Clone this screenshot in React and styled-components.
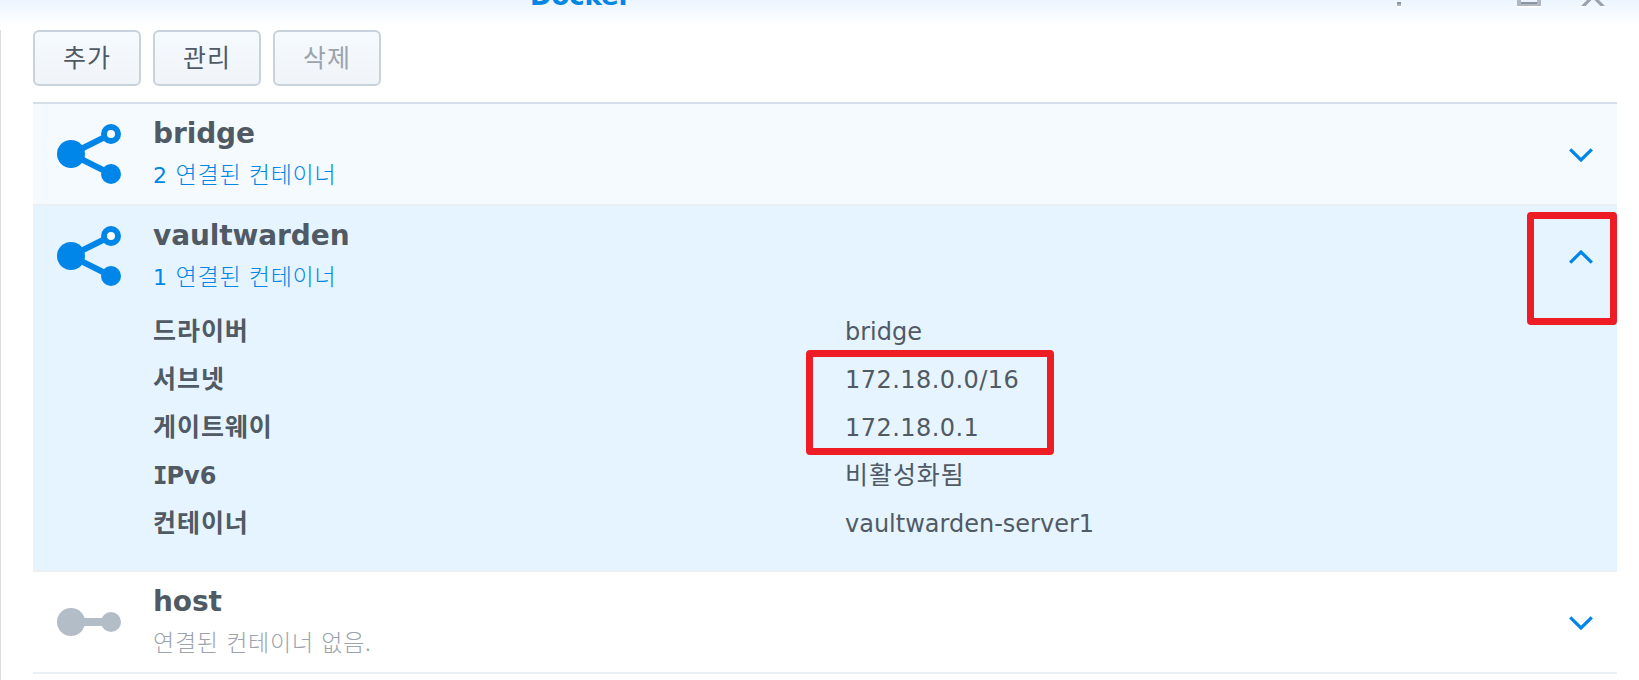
import React from "react";
import styled, { createGlobalStyle } from "styled-components";

const details = [
  { label: "드라이버", value: "bridge" },
  { label: "서브넷", value: "172.18.0.0/16" },
  { label: "게이트웨이", value: "172.18.0.1" },
  { label: "IPv6", value: "비활성화됨" },
  { label: "컨테이너", value: "vaultwarden-server1" },
];

const hasHangul = (text) => /[가-힣]/.test(text);
const isAddress = (text) => /^[\d./]+$/.test(text);

function NetworkIcon() {
  return (
    <Icon viewBox="0 0 64 60" $height={60}>
      <path d="M14 30 46 14M14 30 46 46" stroke="#0086e9" strokeWidth="6" />
      <circle cx="14" cy="30" r="14" fill="#0086e9" />
      <circle cx="54" cy="10" r="7" fill="#fff" stroke="#0086e9" strokeWidth="6" />
      <circle cx="54" cy="50" r="10" fill="#0086e9" />
    </Icon>
  );
}

function HostIcon() {
  return (
    <Icon viewBox="0 0 64 28" $height={28}>
      <path d="M14 14H54" stroke="#b2bdc8" strokeWidth="8" />
      <circle cx="14" cy="14" r="14" fill="#b2bdc8" />
      <circle cx="54" cy="14" r="10" fill="#b2bdc8" />
    </Icon>
  );
}

function Arrow({ up }) {
  return (
    <Arrow__Svg viewBox="0 0 24 14">
      <path
        d={up ? "M1.2 12.6 12 2 22.8 12.6" : "M1.2 1.4 12 12 22.8 1.4"}
        fill="none"
        stroke="#0086e9"
        strokeWidth="3.2"
      />
    </Arrow__Svg>
  );
}

function Network({ name, count, text, background, icon, open, children }) {
  return (
    <Network__Item $background={background}>
      <Network__Head>
        {icon}
        <Network__Text>
          <Network__Name>{name}</Network__Name>
          <Network__Status $muted={!count}>
            {count && <Network__Count>{count} </Network__Count>}
            {text}
          </Network__Status>
        </Network__Text>
        <Toggle>
          <Arrow up={open} />
          {open && <Mark $top={-38.5} $left={-42.5} $width={90} $height={113} />}
        </Toggle>
      </Network__Head>
      {children}
    </Network__Item>
  );
}

function App() {
  return (
    <Window>
      <GlobalStyle />
      <TitleBar>
        <TitleBar__Name>Docker</TitleBar__Name>
        <TitleBar__Icons viewBox="0 0 208 10">
          <path d="M0 6h4v1.5H0zM120 6h24v1.5h-24z" fill="#fff" />
          <path d="M0 2h4v2H0z" fill="#8a95a1" />
          <path d="M0 4h4v2H0z" fill="#acb4be" />
          <path d="M120 0h4v4h16V0h4v6h-24z" fill="#b0b7c2" />
          <path d="M124 2h16v2h-16z" fill="#8a95a1" />
          <path d="M185 7 194 -2M207 7 198 -2" stroke="#fff" strokeWidth="3" />
          <path d="M184 6h4.5L194.5 0H190zM208 6h-4.5L197.5 0H202z" fill="#98a1ac" />
        </TitleBar__Icons>
      </TitleBar>
      <Content>
        <Toolbar>
          <Button>추가</Button>
          <Button>관리</Button>
          <Button disabled>삭제</Button>
        </Toolbar>
        <List>
          <Network
            name="bridge"
            count="2"
            text="연결된 컨테이너"
            background="#f5faff"
            icon={<NetworkIcon />}
          />
          <Network
            name="vaultwarden"
            count="1"
            text="연결된 컨테이너"
            background="#e6f4ff"
            icon={<NetworkIcon />}
            open
          >
            <Details>
              {details.map(({ label, value }) => (
                <Details__Row key={label}>
                  <Details__Label $hangul={hasHangul(label)}>
                    {label.startsWith("I") ? (
                      <>
                        <Serif__Letter>I</Serif__Letter>
                        {label.slice(1)}
                      </>
                    ) : (
                      label
                    )}
                  </Details__Label>
                  <Details__Value
                    $hangul={hasHangul(value)}
                    $address={isAddress(value)}
                  >
                    {value}
                  </Details__Value>
                </Details__Row>
              ))}
              <Mark $top={44} $left={772.5} $width={248} $height={105} />
            </Details>
          </Network>
          <Network
            name="host"
            text="연결된 컨테이너 없음."
            background="#fff"
            icon={<HostIcon />}
          />
        </List>
      </Content>
    </Window>
  );
}

export default App;

const GlobalStyle = createGlobalStyle`
  * {
    box-sizing: border-box;
  }
  body {
    margin: 0;
    overflow: hidden;
    background: #fff;
    font-family: "DejaVu Sans", "Noto Sans CJK KR", sans-serif;
    color: #505a64;
  }
`;
const Window = styled.div`
  height: 680px;
  display: flex;
  flex-direction: column;
  overflow: hidden;
`;
const TitleBar = styled.header`
  height: 30px;
  flex: none;
  display: flex;
  align-items: flex-start;
  justify-content: space-between;
  padding: 0 34px 0 530px;
  overflow: hidden;
  background: linear-gradient(#ebf4fe, #f6fbff 48%, #fff 90%);
`;
const TitleBar__Name = styled.div`
  margin-top: -23px;
  font-size: 26px;
  line-height: 38px;
  font-weight: bold;
  letter-spacing: -0.1px;
  color: #0086e5;
`;
const TitleBar__Icons = styled.svg`
  width: 208px;
  height: 10px;
`;
const Content = styled.main`
  flex: 1;
  padding: 0 22px 0 32px;
  border-left: 1px solid #dcdcdc;
`;
const Toolbar = styled.div`
  display: flex;
  gap: 12px;
  margin-bottom: 16px;
`;
const Button = styled.button`
  width: 108px;
  height: 56px;
  padding: 0 0 4px;
  border: 2px solid #c8d2dc;
  border-radius: 6px;
  background: linear-gradient(#f5faff, #f0f4f8);
  font-family: "Noto Sans CJK KR", sans-serif;
  font-size: 25px;
  letter-spacing: 0.9px;
  color: #505a64;
  &:disabled {
    color: #9ba3ac;
  }
`;
const List = styled.div`
  border-top: 2px solid #d5dfeb;
`;
const Network__Item = styled.section`
  border-bottom: 2px solid #ebf0f5;
  background: ${(props) => props.$background};
`;
const Network__Head = styled.div`
  height: 100px;
  display: flex;
  align-items: center;
  padding: 0 24px;
`;
const Icon = styled.svg`
  flex: none;
  width: 64px;
  height: ${(props) => props.$height}px;
  margin-right: 32px;
`;
const Network__Text = styled.div`
  flex: 1;
  display: flex;
  flex-direction: column;
`;
const Network__Name = styled.div`
  font-size: 28px;
  line-height: 40px;
  font-weight: bold;
  letter-spacing: -0.1px;
`;
const Network__Status = styled.div`
  height: 41px;
  font-family: "Noto Sans CJK KR", sans-serif;
  font-size: 23px;
  line-height: 39px;
  font-weight: 300;
  letter-spacing: 0.75px;
  word-spacing: 1.6px;
  color: ${(props) => (props.$muted ? "#9ba3ac" : "#0086e5")};
`;
const Network__Count = styled.span`
  font-family: "DejaVu Sans", sans-serif;
  font-size: 22px;
  line-height: 1;
  font-weight: normal;
  letter-spacing: 0;
`;
const Toggle = styled.div`
  position: relative;
  display: flex;
  margin-top: 2px;
`;
const Arrow__Svg = styled.svg`
  width: 24px;
  height: 14px;
`;
const Details = styled.div`
  position: relative;
  padding: 1px 0 23px 120px;
`;
const Details__Row = styled.div`
  height: 48px;
  display: grid;
  grid-template-columns: 692px 1fr;
`;
const Details__Label = styled.div`
  font-family: ${(props) =>
    props.$hangul ? '"Noto Sans CJK KR", sans-serif' : '"DejaVu Sans", sans-serif'};
  font-size: ${(props) => (props.$hangul ? 25 : 24)}px;
  line-height: ${(props) => (props.$hangul ? 44 : 50)}px;
  letter-spacing: ${(props) => (props.$hangul ? 0.95 : 0)}px;
  font-weight: bold;
`;
const Details__Value = styled.div`
  font-family: ${(props) =>
    props.$hangul ? '"Noto Sans CJK KR", sans-serif' : '"DejaVu Sans", sans-serif'};
  font-size: ${(props) => (props.$hangul ? 25 : 24)}px;
  line-height: ${(props) => (props.$hangul ? 44 : 50)}px;
  letter-spacing: ${(props) =>
    props.$hangul ? 0.95 : props.$address ? 0.45 : 0}px;
`;
const Serif__Letter = styled.span`
  font-family: "DejaVu Sans Mono", monospace;
  letter-spacing: -1px;
`;
const Mark = styled.div`
  position: absolute;
  top: ${(props) => props.$top}px;
  left: ${(props) => props.$left}px;
  width: ${(props) => props.$width}px;
  height: ${(props) => props.$height}px;
  border: 7px solid #ee1c24;
  border-radius: 4px;
`;
